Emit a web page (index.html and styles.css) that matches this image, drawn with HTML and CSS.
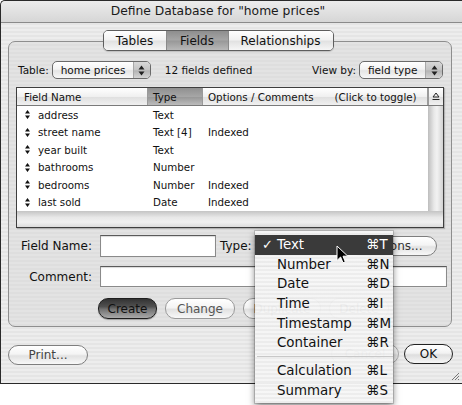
FILE: index.html
```html
<!DOCTYPE html>
<html>
<head>
<meta charset="utf-8">
<title>Define Database</title>
<link rel="stylesheet" href="styles.css">
</head>
<body>
<div class="window">
  <div class="titlebar">Define Database for "home prices"</div>
  <div class="segwrap">
    <div class="segmented">
      <span class="seg s-tables">Tables</span><span class="seg s-fields sel">Fields</span><span class="seg s-rel">Relationships</span>
    </div>
  </div>
  <div class="tabbox">
    <div class="toprow">
      <span class="small lbl-table">Table:</span>
      <span class="popup p-table"><span class="ptext">home prices</span><span class="parrow"><svg width="7" height="11" viewBox="0 0 7 11"><path d="M0.5 4.5 L3.5 0.5 L6.5 4.5 Z M0.5 6.5 L3.5 10.5 L6.5 6.5 Z" fill="#222"/></svg></span></span>
      <span class="small count">12 fields defined</span>
      <span class="spacer"></span>
      <span class="small">View by:</span>
      <span class="popup p-view"><span class="ptext">field type</span><span class="parrow"><svg width="7" height="11" viewBox="0 0 7 11"><path d="M0.5 4.5 L3.5 0.5 L6.5 4.5 Z M0.5 6.5 L3.5 10.5 L6.5 6.5 Z" fill="#222"/></svg></span></span>
    </div>
    <div class="list">
      <div class="lhead">
        <div class="hc">Field Name</div>
        <div class="hc hsel">Type</div>
        <div class="hc">Options / Comments<span class="toggle">(Click to toggle)</span></div>
        <div class="hc hsort"><svg width="8" height="9" viewBox="0 0 8 9"><path d="M1 5 L4 1 L7 5 Z" fill="none" stroke="#222" stroke-width="1"/><path d="M0.5 7.5 H7.5" stroke="#222" stroke-width="1"/></svg></div>
      </div>
      <div class="lbody">
        <div class="rows">
          <div class="row"><span class="c1"><svg class="handle" width="5" height="9" viewBox="0 0 5 9"><path d="M0 3.5 L2.5 0 L5 3.5 Z M0 5.5 L2.5 9 L5 5.5 Z" fill="#111"/></svg>address</span><span class="c2">Text</span><span class="c3"></span></div>
          <div class="row"><span class="c1"><svg class="handle" width="5" height="9" viewBox="0 0 5 9"><path d="M0 3.5 L2.5 0 L5 3.5 Z M0 5.5 L2.5 9 L5 5.5 Z" fill="#111"/></svg>street name</span><span class="c2">Text [4]</span><span class="c3">Indexed</span></div>
          <div class="row"><span class="c1"><svg class="handle" width="5" height="9" viewBox="0 0 5 9"><path d="M0 3.5 L2.5 0 L5 3.5 Z M0 5.5 L2.5 9 L5 5.5 Z" fill="#111"/></svg>year built</span><span class="c2">Text</span><span class="c3"></span></div>
          <div class="row"><span class="c1"><svg class="handle" width="5" height="9" viewBox="0 0 5 9"><path d="M0 3.5 L2.5 0 L5 3.5 Z M0 5.5 L2.5 9 L5 5.5 Z" fill="#111"/></svg>bathrooms</span><span class="c2">Number</span><span class="c3"></span></div>
          <div class="row"><span class="c1"><svg class="handle" width="5" height="9" viewBox="0 0 5 9"><path d="M0 3.5 L2.5 0 L5 3.5 Z M0 5.5 L2.5 9 L5 5.5 Z" fill="#111"/></svg>bedrooms</span><span class="c2">Number</span><span class="c3">Indexed</span></div>
          <div class="row"><span class="c1"><svg class="handle" width="5" height="9" viewBox="0 0 5 9"><path d="M0 3.5 L2.5 0 L5 3.5 Z M0 5.5 L2.5 9 L5 5.5 Z" fill="#111"/></svg>last sold</span><span class="c2">Date</span><span class="c3">Indexed</span></div>
        </div>
        <div class="vscroll"></div>
      </div>
      <div class="hscroll"></div>
    </div>
    <div class="frow f1">
      <span class="flabel">Field Name:</span>
      <span class="input in-name"></span>
      <span class="flabel2">Type:</span>
      <span class="popup p-type"><span class="ptext"></span><span class="parrow"></span></span>
      <span class="btn b-options">Options...</span>
    </div>
    <div class="frow f2">
      <span class="flabel">Comment:</span>
      <span class="input in-comment"></span>
    </div>
    <div class="brow">
      <span class="btn b-create">Create</span>
      <span class="btn b-change">Change</span>
      <span class="btn b-dup">Duplicate</span>
      <span class="btn b-del">Delete</span>
    </div>
  </div>
  <div class="bottom">
    <span class="btn b-print">Print...</span>
    <span class="spacer"></span>
    <span class="btn b-cancel">Cancel</span>
    <span class="btn b-ok">OK</span>
  </div>
  <svg class="grip" width="10" height="10" viewBox="0 0 10 10"><path d="M9 2 L2 9 M9 5 L5 9 M9 8 L8 9" stroke="#777" stroke-width="1"/></svg>
</div>

<div class="menu">
  <div class="mi hi"><span class="chk">✓</span><span class="mt">Text</span><span class="ms">⌘T</span></div>
  <div class="mi"><span class="chk"></span><span class="mt">Number</span><span class="ms">⌘N</span></div>
  <div class="mi"><span class="chk"></span><span class="mt">Date</span><span class="ms">⌘D</span></div>
  <div class="mi"><span class="chk"></span><span class="mt">Time</span><span class="ms">⌘I</span></div>
  <div class="mi"><span class="chk"></span><span class="mt">Timestamp</span><span class="ms">⌘M</span></div>
  <div class="mi"><span class="chk"></span><span class="mt">Container</span><span class="ms">⌘R</span></div>
  <div class="msep"></div>
  <div class="mi"><span class="chk"></span><span class="mt">Calculation</span><span class="ms">⌘L</span></div>
  <div class="mi"><span class="chk"></span><span class="mt">Summary</span><span class="ms">⌘S</span></div>
</div>
<svg class="cursor" width="13" height="20" viewBox="0 0 13 20"><path d="M1 1 L1 15.5 L4.6 12 L7 17.8 L9.3 16.8 L7 11.2 L11.8 11.2 Z" fill="#000" stroke="#fff" stroke-width="1" stroke-linejoin="round"/></svg>
</body>
</html>
```

FILE: styles.css
```css
body {
  margin: 0;
  width: 462px;
  height: 405px;
  overflow: hidden;
  position: relative;
  background: #fff;
  font-family: "DejaVu Sans", "Liberation Sans", sans-serif;
  color: #111;
}

.window {
  position: relative;
  width: 462px;
  height: 384px;
  box-sizing: border-box;
  border: 1px solid #2a2a2a;
  border-right: none;
  border-radius: 5px 0 0 0;
  background: repeating-linear-gradient(to bottom, #ededed 0, #ededed 2px, #e5e5e5 2px, #e5e5e5 4px);
}

.titlebar {
  height: 21px;
  line-height: 21px;
  border-bottom: 1px solid #8a8a8a;
  background: linear-gradient(#ececec, #d6d6d6);
  font-size: 12.3px;
  color: #1a1a1a;
  text-align: center;
  padding-right: 27px;
  border-radius: 5px 0 0 0;
}

.segwrap {
  display: flex;
  justify-content: center;
  padding-right: 27px;
  margin-top: 7px;
  position: relative;
  z-index: 1;
}

.segmented {
  display: flex;
  height: 21px;
  box-sizing: border-box;
  border: 1px solid #5e5e5e;
  border-radius: 5px;
  overflow: hidden;
  box-shadow: 0 1px 1px rgba(0,0,0,0.15);
}

.seg {
  display: flex;
  align-items: center;
  justify-content: center;
  font-size: 12px;
  color: #111;
  background: linear-gradient(#ffffff, #f2f2f2 45%, #e2e2e2 55%, #f6f6f6);
  border-right: 1px solid #8a8a8a;
  box-sizing: border-box;
}

.s-tables { width: 63px; }
.s-fields { width: 62px; }
.s-rel { width: 104px; border-right: none; }

.seg.sel {
  background: linear-gradient(#8e8e8e, #a4a4a4 45%, #9a9a9a 55%, #b8b8b8);
}

.tabbox {
  margin: -10px 0 0 7px;
  width: 444px;
  box-sizing: border-box;
  border: 1px solid #8e8e8e;
  border-radius: 7px;
  background: repeating-linear-gradient(to bottom, #e3e3e3 0, #e3e3e3 2px, #dedede 2px, #dedede 4px);
  padding: 19px 7px 7px 7px;
}

.toprow {
  display: flex;
  align-items: center;
  height: 18px;
}

.small {
  font-size: 10.5px;
  color: #111;
}

.lbl-table { margin-left: 2px; }
.count { margin-left: 14px; }
.spacer { flex: 1; }

.popup {
  display: flex;
  align-items: center;
  height: 18px;
  box-sizing: border-box;
  border: 1px solid #6a6a6a;
  border-radius: 5px;
  overflow: hidden;
  background: linear-gradient(#ffffff, #f3f3f3 45%, #e4e4e4 55%, #f7f7f7);
  font-size: 10.5px;
  flex-shrink: 0;
}

.ptext {
  flex: 1;
  padding-left: 8px;
  white-space: nowrap;
}

.parrow {
  width: 16px;
  height: 100%;
  display: flex;
  align-items: center;
  justify-content: center;
  border-left: 1px solid #a8a8a8;
  background: linear-gradient(#d8d8d8, #c4c4c4 50%, #b4b4b4 55%, #d4d4d4);
}

.p-table { margin-left: 3px; width: 99px; }
.p-view { margin-left: 3px; width: 84px; margin-right: 1px; }

.list {
  margin-top: 8px;
  width: 428px;
  height: 141px;
  box-sizing: border-box;
  border: 1px solid #3e3e3e;
  background: #fff;
  box-shadow: 1px 1px 1px rgba(0,0,0,0.2);
}

.lhead {
  display: grid;
  grid-template-columns: 131px 55px 225px 15px;
  height: 18px;
  box-sizing: border-box;
  border-bottom: 1px solid #7a7a7a;
  background: linear-gradient(#ffffff, #f0f0f0 50%, #e0e0e0 55%, #f0f0f0);
}

.hc {
  display: flex;
  align-items: center;
  font-size: 10.3px;
  padding-left: 7px;
  border-right: 1px solid #9a9a9a;
  box-sizing: border-box;
  white-space: nowrap;
  overflow: hidden;
}

.hc:nth-child(2), .hc:nth-child(3) { padding-left: 5px; }

.hsel {
  background: linear-gradient(#909090, #a6a6a6 50%, #989898 55%, #bcbcbc);
}

.toggle { margin-left: 21px; }

.hsort {
  padding-left: 3px;
  border-right: none;
  border-left: 1px solid #9a9a9a;
}

.lbody {
  display: flex;
  height: 105px;
}

.rows {
  width: 411px;
  background: #fff;
}

.row {
  display: grid;
  grid-template-columns: 131px 55px 225px;
  height: 17.5px;
  align-items: center;
  font-size: 10.3px;
}

.c1 {
  display: flex;
  align-items: center;
  padding-left: 8px;
}

.handle { margin-right: 8px; }

.c2, .c3 { padding-left: 5px; }

.vscroll {
  width: 15px;
  background: linear-gradient(to right, #bdbdbd, #e8e8e8 40%, #f2f2f2 60%, #d2d2d2);
}

.hscroll {
  height: 16px;
  background: linear-gradient(#c4c4c4, #e8e8e8 40%, #f0f0f0 70%, #dcdcdc);
}

.frow {
  display: flex;
  align-items: center;
}

.f1 { margin-top: 7px; height: 22px; }
.f2 { margin-top: 9px; height: 21px; }

.flabel {
  width: 76px;
  text-align: right;
  font-size: 12px;
  flex-shrink: 0;
}

.flabel2 {
  margin-left: 4px;
  font-size: 12px;
}

.input {
  display: block;
  margin-left: 8px;
  box-sizing: border-box;
  border: 1px solid #8a8a8a;
  border-top-color: #5a5a5a;
  background: #fff;
  box-shadow: inset 0 1px 1px rgba(0,0,0,0.15);
  flex-shrink: 0;
}

.in-name { width: 116px; height: 22px; }
.in-comment { width: 347px; height: 21px; }

.p-type { margin-left: 3px; width: 92px; height: 19px; }

.btn {
  display: flex;
  align-items: center;
  justify-content: center;
  height: 20px;
  box-sizing: border-box;
  border: 1px solid #7e7e7e;
  border-radius: 10px;
  background: linear-gradient(#ffffff, #f4f4f4 45%, #e2e2e2 55%, #f8f8f8);
  font-size: 12px;
  color: #333;
  flex-shrink: 0;
  white-space: nowrap;
}

.b-options { margin-left: 4px; width: 86px; }

.brow {
  display: flex;
  margin-top: 11px;
  height: 21px;
}

.brow .btn { height: 21px; }

.b-create {
  margin-left: 82px;
  width: 59px;
  color: #111;
  border-color: #1e1e1e;
  background: linear-gradient(#333333, #505050 40%, #747474 55%, #aaaaaa);
  box-shadow: 0 1px 1px rgba(0,0,0,0.3);
}

.b-change { margin-left: 8px; width: 70px; color: #555; border-color: #9a9a9a; }
.b-dup { margin-left: 8px; width: 78px; color: #555; border-color: #9a9a9a; }
.b-del { margin-left: 8px; width: 60px; color: #555; border-color: #9a9a9a; }

.bottom {
  display: flex;
  margin: 16px 9px 0 7px;
  height: 21px;
  align-items: center;
}

.b-print { width: 80px; color: #444; margin-top: 2px; }
.b-cancel { width: 68px; color: #888; border-color: #aaa; }
.b-ok {
  margin-left: 5px;
  width: 49px;
  color: #111;
  border-color: #222;
  background: linear-gradient(#ffffff, #f2f2f2 45%, #dedede 55%, #f6f6f6);
}

.grip {
  position: absolute;
  right: 2px;
  bottom: 2px;
}

.menu {
  position: absolute;
  left: 255px;
  top: 231px;
  width: 138px;
  height: 172px;
  box-sizing: border-box;
  padding-top: 4px;
  background: repeating-linear-gradient(to bottom, rgba(246,246,246,0.95) 0, rgba(246,246,246,0.95) 2px, rgba(236,236,236,0.95) 2px, rgba(236,236,236,0.95) 4px);
  box-shadow: 0 3px 7px rgba(0,0,0,0.5), 0 0 0 1px rgba(0,0,0,0.15);
  font-size: 13.4px;
  color: #111;
}

.mi {
  display: grid;
  grid-template-columns: 22px 89px auto;
  height: 19.6px;
  align-items: center;
  white-space: nowrap;
}

.mi.hi {
  background: #3a3a3a;
  color: #fff;
}

.chk {
  padding-left: 7px;
  font-size: 13px;
}

.msep {
  height: 8.6px;
  display: flex;
  align-items: center;
}

.msep::before {
  content: "";
  display: block;
  width: 100%;
  height: 1px;
  margin-left: 2px;
  background: #c8c8c8;
}

.cursor {
  position: absolute;
  left: 336px;
  top: 245px;
}
```
